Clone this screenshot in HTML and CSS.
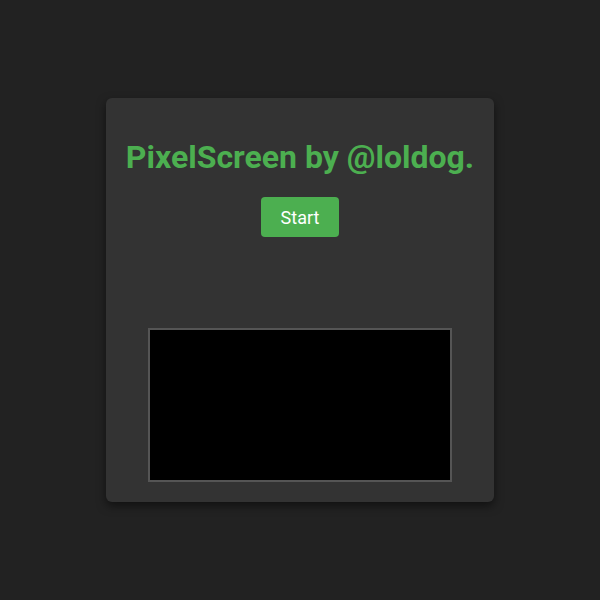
FILE: index.html
```html
<!DOCTYPE html>
<html>
<head>
<meta charset="utf-8">
<link rel="stylesheet" href="styles.css">
</head>
<body>
<div class="card">
  <h1 class="title">PixelScreen by @loldog.</h1>
  <button class="start">Start</button>
  <div class="spacer"></div>
  <canvas class="screen" width="300" height="150"></canvas>
</div>
</body>
</html>
```
FILE: styles.css
```css
html, body {
  margin: 0;
  padding: 0;
  height: 100%;
}
body {
  background: #222222;
  font-family: Roboto, "Liberation Sans", sans-serif;
  display: flex;
  align-items: center;
  justify-content: center;
}
.card {
  background: #333333;
  border-radius: 6px;
  padding: 20px;
  box-shadow: 0 4px 10px rgba(0, 0, 0, 0.5);
  display: flex;
  flex-direction: column;
  align-items: center;
}
.title {
  color: #4caf50;
  font-size: 32px;
  font-weight: 700;
  margin: 20px 0 21px;
}
.start {
  background: #4caf50;
  color: #ffffff;
  border: none;
  border-radius: 4px;
  font-family: Roboto, "Liberation Sans", sans-serif;
  font-size: 18px;
  padding: 10px 20px;
  height: 40px;
}
.spacer {
  height: 91px;
}
.screen {
  display: block;
  background: #000000;
  border: 2px solid #555555;
}
```
